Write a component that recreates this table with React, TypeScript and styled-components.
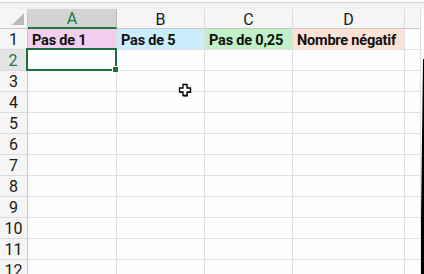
import * as React from 'react'
import styled, { createGlobalStyle } from 'styled-components'

const GlobalStyle = createGlobalStyle`
  html, body {
    margin: 0;
    padding: 0;
    background: #ffffff;
    overflow: hidden;
  }
`

const columns = ['A', 'B', 'C', 'D', '']
const widths = [89, 88, 88, 112]

interface HeadCell {
  text: string
  bg: string
}

const headings: HeadCell[] = [
  { text: 'Pas de 1', bg: '#f2ceef' },
  { text: 'Pas de 5', bg: '#caedfb' },
  { text: 'Pas de 0,25', bg: '#c1f0c8' },
  { text: 'Nombre négatif', bg: '#fbe2d5' },
]

const Window = styled.div`
  position: relative;
  width: 424px;
  height: 274px;
  display: flex;
  flex-direction: column;
  font-family: Roboto, 'Liberation Sans', Arial, sans-serif;
  background: #fefefe;
  overflow: hidden;
`

const TopStrip = styled.div`
  height: 9px;
  flex: none;
  box-sizing: border-box;
  background: #f3f3f3;
  border-top: 2px solid #fbfbfb;
  border-bottom: 1px solid #f0f0f0;
  box-shadow: inset 0 1px 0 #d4d4d4;
`

const Body = styled.div`
  flex: 1;
  display: flex;
  min-height: 0;
`

const Grid = styled.div`
  flex: 1;
  display: grid;
  grid-template-columns: 28px ${widths.map((w) => `${w}px`).join(' ')} 1fr;
  grid-template-rows: 20px;
  grid-auto-rows: 21px;
`

const EdgeStrip = styled.div`
  width: 3px;
  flex: none;
  background: #000000;
  clip-path: polygon(calc(100% - 1px) 50px, 100% 50px, 100% 100%, 0 100%, 0 210px);
`

const Corner = styled.div`
  position: relative;
  box-sizing: border-box;
  background: #f5f5f5;
  border-right: 1px solid #c8c8c8;
  border-bottom: 1px solid #c8c8c8;

  &::after {
    content: '';
    position: absolute;
    right: 3px;
    bottom: 3px;
    width: 0;
    height: 0;
    border-left: 12px solid transparent;
    border-bottom: 12px solid #b9b9b9;
  }
`

const ColHead = styled.div<{ $active?: boolean }>`
  box-sizing: border-box;
  display: flex;
  align-items: center;
  justify-content: center;
  font-size: 16px;
  padding-top: 1px;
  color: ${(p) => (p.$active ? '#137a43' : '#1a1a1a')};
  background: ${(p) => (p.$active ? '#d3d3d3' : '#f5f5f5')};
  border-right: 1px solid ${(p) => (p.$active ? '#b8b8b8' : '#dcdcdc')};
  border-bottom: ${(p) => (p.$active ? '2px solid #1b7a45' : '1px solid #c8c8c8')};
`

const RowHead = styled.div<{ $active?: boolean }>`
  box-sizing: border-box;
  display: flex;
  align-items: center;
  justify-content: center;
  font-size: 16px;
  padding-top: 1px;
  color: ${(p) => (p.$active ? '#137a43' : '#1a1a1a')};
  background: ${(p) => (p.$active ? '#e4e4e4' : '#f5f5f5')};
  border-right: ${(p) => (p.$active ? '2px solid #1b7a45' : '1px solid #c8c8c8')};
  border-bottom: 1px solid #dcdcdc;
`

const Cell = styled.div<{ $bg?: string }>`
  position: relative;
  box-sizing: border-box;
  display: flex;
  align-items: center;
  padding: 2px 0 0 4px;
  font-size: 14.5px;
  font-weight: bold;
  letter-spacing: -0.2px;
  color: #111111;
  white-space: nowrap;
  background: ${(p) => p.$bg || 'transparent'};
  border-right: 1px solid #e1e1e1;
  border-bottom: 1px solid #e1e1e1;
`

const Selection = styled.div`
  position: absolute;
  left: -2px;
  top: -2px;
  right: -1px;
  bottom: -1px;
  border: 2px solid #1d6f42;
  z-index: 2;

  &::after {
    content: '';
    position: absolute;
    right: -4px;
    bottom: -4px;
    width: 5px;
    height: 5px;
    background: #1d6f42;
    border: 1px solid #ffffff;
  }
`

const Cursor = styled.svg`
  position: absolute;
  left: 177px;
  top: 82px;
  z-index: 3;
`

export default function App() {
  const rows = Array.from({ length: 12 }, (_, i) => i + 1)

  return (
    <Window>
      <GlobalStyle />
      <TopStrip />
      <Body>
        <Grid>
          <Corner />
          {columns.map((c, i) => (
            <ColHead key={`h${i}`} $active={c === 'A'}>
              {c}
            </ColHead>
          ))}
          {rows.map((r) => (
            <React.Fragment key={r}>
              <RowHead $active={r === 2}>{r}</RowHead>
              {columns.map((_, ci) => {
                const head = r === 1 ? headings[ci] : undefined
                return (
                  <Cell key={ci} $bg={head?.bg}>
                    {head?.text}
                    {r === 2 && ci === 0 && <Selection />}
                  </Cell>
                )
              })}
            </React.Fragment>
          ))}
        </Grid>
        <EdgeStrip />
      </Body>
      <Cursor width="16" height="16" viewBox="0 0 16 16">
        <path d="M6 2.5 H10 V6 H13.5 V10 H10 V13.5 H6 V10 H2.5 V6 H6 Z" fill="#000" transform="translate(0.6 1)" />
        <path d="M6 2.5 H10 V6 H13.5 V10 H10 V13.5 H6 V10 H2.5 V6 H6 Z" fill="#ffffff" stroke="#000000" strokeWidth="1.3" />
      </Cursor>
    </Window>
  )
}
